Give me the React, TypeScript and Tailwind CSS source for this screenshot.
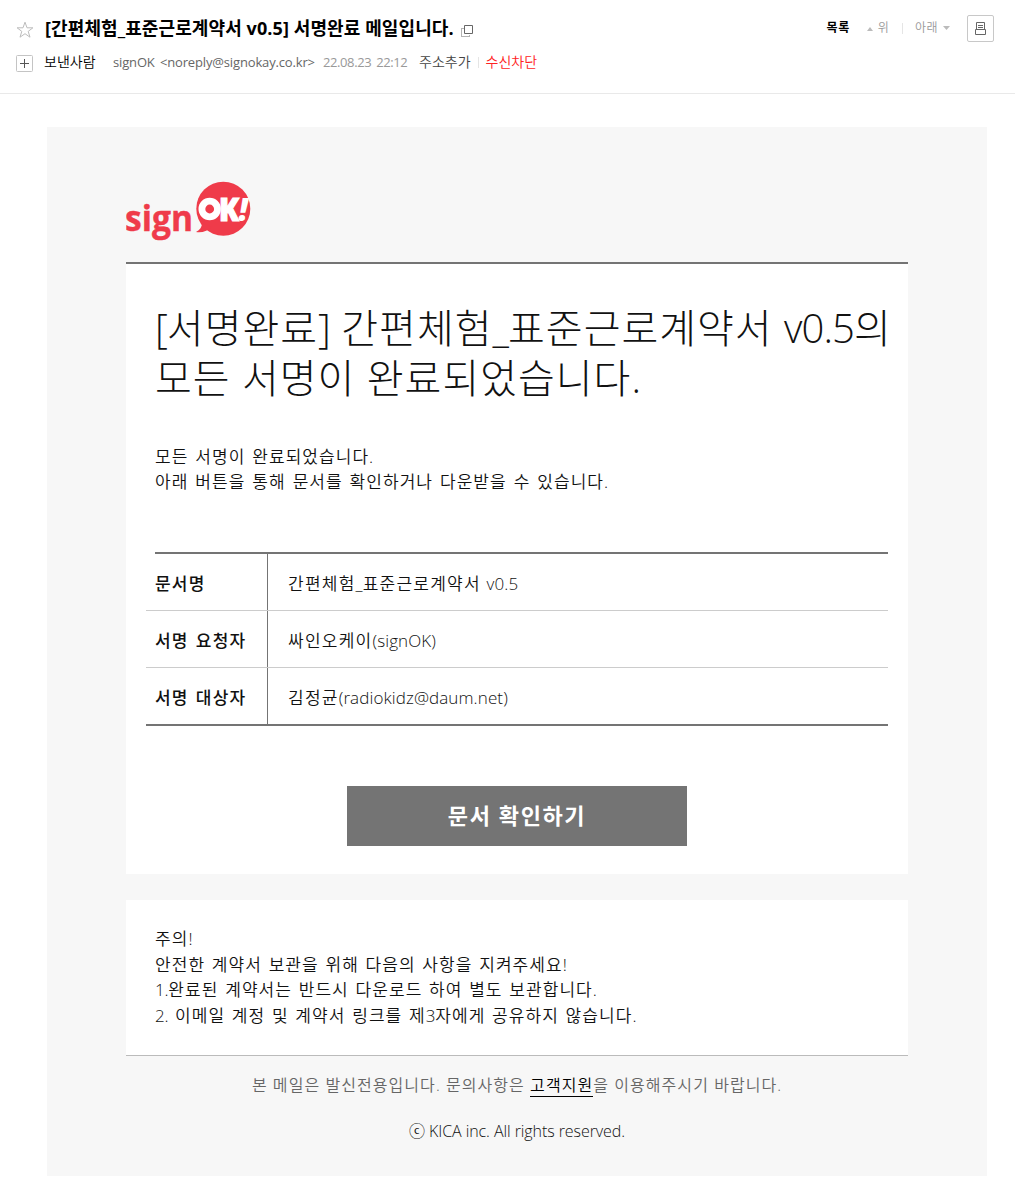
import React from "react";

const rows = [
  { label: "문서명", value: "간편체험_표준근로계약서 v0.5" },
  { label: "서명 요청자", value: "싸인오케이(signOK)" },
  { label: "서명 대상자", value: "김정균(radiokidz@daum.net)" },
];

const notices = [
  "주의!",
  "안전한 계약서 보관을 위해 다음의 사항을 지켜주세요!",
  "1.완료된 계약서는 반드시 다운로드 하여 별도 보관합니다.",
  "2. 이메일 계정 및 계약서 링크를 제3자에게 공유하지 않습니다.",
];

// 영문/숫자 구간만 자간을 따로 적용
const Mixed = ({ text, latin = "tracking-normal" }: { text: string; latin?: string }) => (
  <>
    {text.split(/([!-~]+)/).map((part, i) =>
      i % 2 ? (
        <span key={i} className={latin}>
          {part}
        </span>
      ) : (
        part
      )
    )}
  </>
);

const Logo = () => (
  <svg width="126" height="62" viewBox="0 0 126 62" className="block">
    <circle cx="97.3" cy="28.7" r="27" fill="#ef3b4a" />
    <path d="M76 43c0 4-2 7-6 9 6 1 12-1 16-5z" fill="#ef3b4a" />
    <text
      x="-1"
      y="51"
      fill="#ef3b4a"
      stroke="#ef3b4a"
      strokeWidth="0.4"
      fontSize="36"
      fontWeight="700"
      fontFamily="'Open Sans', sans-serif"
      textLength="68"
      lengthAdjust="spacingAndGlyphs"
    >
      sign
    </text>
    <circle cx="83.7" cy="29" r="7.8" fill="none" stroke="#fff" strokeWidth="6.8" />
    <text
      x="93"
      y="40.5"
      fill="#fff"
      stroke="#fff"
      strokeWidth="1.2"
      fontSize="31"
      fontWeight="800"
      fontFamily="'Open Sans', sans-serif"
      textLength="20"
      lengthAdjust="spacingAndGlyphs"
    >
      K
    </text>
    <text
      x="112.5"
      y="40.5"
      fill="#fff"
      fontSize="31"
      fontWeight="800"
      fontStyle="italic"
      fontFamily="'Open Sans', sans-serif"
    >
      !
    </text>
  </svg>
);

const MailHeader = () => (
  <header className="flex h-[94px] justify-between border-b border-[#e9e9e9] pr-[21px] pl-4">
    <div className="pt-[15px]">
      <div className="flex h-[26px] items-center">
        <svg width="18" height="18" viewBox="0 0 18 18" className="mt-1 mr-[11px]">
          <path
            d="M9 1.2l2 5.6h5.9l-4.7 3.6 1.8 5.8L9 12.7l-5 3.5 1.8-5.8L1.1 6.8H7z"
            fill="none"
            stroke="#bdbdbd"
            strokeWidth="1"
          />
        </svg>
        <h1 className="text-lg leading-[26px] font-bold tracking-[0.1px] whitespace-nowrap text-black">
          [간편체험_표준근로계약서 v0.5] 서명완료 메일입니다.
        </h1>
        <svg width="12" height="12" viewBox="0 0 12 12" className="mt-1.5 ml-[7px]" fill="none">
          <path d="M3.5.5h8v8h-8z" stroke="#666" />
          <path d="M2.5 3.5h-2v8h8v-2" stroke="#666" strokeDasharray="1 1" />
        </svg>
      </div>
      <div className="mt-[9px] flex h-6 items-center text-[13px] leading-6 font-[350] whitespace-nowrap">
        <svg width="17" height="17" viewBox="0 0 17 17" className="mt-0.5 mr-[11px]" fill="none">
          <rect x=".5" y=".5" width="16" height="16" rx="1" stroke="#c4c4c4" />
          <path d="M4 8.5h9M8.5 4v9" stroke="#555" />
        </svg>
        <span className="w-[69px] text-sm leading-6 text-black">보낸사람</span>
        <span className="w-[210px] font-normal tracking-[-0.15px] text-[#666] [word-spacing:2px]">
          signOK &lt;noreply@signokay.co.kr&gt;
        </span>
        <span className="w-[96px] font-normal tracking-[-0.4px] text-[#999] [word-spacing:2px]">22.08.23 22:12</span>
        <span className="text-sm leading-6 text-[#444]">주소추가</span>
        <span className="mx-[7px] h-[11px] w-px bg-[#e5e5e5]" />
        <span className="text-sm leading-6 text-[#f22]">수신차단</span>
      </div>
    </div>
    <nav className="mt-[14px] flex h-7 items-center text-xs">
      <b className="tracking-[0.6px] text-black">목록</b>
      <svg width="6" height="4" className="mt-px mr-[5px] ml-[17px]">
        <path d="M3 0l3 4H0z" fill="#bbb" />
      </svg>
      <span className="font-[350] text-[#999]">위</span>
      <span className="mr-[12px] ml-[13px] h-[11px] w-px bg-[#e5e5e5]" />
      <span className="font-[350] tracking-[0.5px] text-[#999]">아래</span>
      <svg width="7" height="4" className="mr-[17px] ml-[5px]">
        <path d="M0 0h7L3.5 4z" fill="#bbb" />
      </svg>
      <span className="flex h-[27px] w-[27px] items-center justify-center rounded-xs border border-[#c8c8c8]">
        <svg width="11" height="13" viewBox="0 0 11 13" fill="none" stroke="#666">
          <path d="M1.5 7V.5h8V7M.5 7.5h10v5H.5zM3 3.5h5M3 5.5h5" />
        </svg>
      </span>
    </nav>
  </header>
);

const App = () => {
  return (
    <div className="min-h-[1198px] bg-white font-['Open_Sans','Noto_Sans_CJK_KR',sans-serif] text-[#111]">
      <MailHeader />
      <main className="mt-[33px] ml-[47px] h-[1049px] w-[940px] bg-[#f7f7f7] px-[79px] pt-[53px]">
        <Logo />

        <section className="mt-5 h-[612px] border-t-2 border-[#747474] bg-white px-5 pt-[39px]">
          <h2 className="ml-[9px] text-[40px] leading-[50px] font-light tracking-[1px] whitespace-nowrap">
            <Mixed text="[서명완료] 간편체험_표준근로계약서 v0.5의" latin="tracking-[-0.9px]" />
            <br />
            모든 서명이 완료되었습니다.
          </h2>
          <p className="mt-[41px] ml-[9px] text-[17px] leading-[25px] font-[350] tracking-[1.04px] [word-spacing:1.5px]">
            모든 서명이 완료되었습니다.
            <br />
            아래 버튼을 통해 문서를 확인하거나 다운받을 수 있습니다.
          </p>

          {/* 문서 정보 */}
          <div className="mt-[58px] border-b-2 border-[#747474]">
            <div className="ml-[9px] h-0.5 bg-[#747474]" />
            {rows.map((row, i) => (
              <div
                key={row.label}
                className={`flex text-[17px] leading-[60px] whitespace-nowrap ${
                  i < 2 ? "h-[57px] border-b border-[#ccc]" : "h-[56px]"
                }`}
              >
                <span className="w-[122px] border-r border-[#747474] pl-[9px] font-medium tracking-[1.2px] [word-spacing:1.5px]">
                  {row.label}
                </span>
                <span className="pl-5 font-[350] tracking-[1.25px]">
                  <Mixed text={row.value} latin="tracking-[0.1px]" />
                </span>
              </div>
            ))}
          </div>

          <button className="mx-auto mt-[60px] block h-[60px] w-[340px] bg-[#747474] pb-0.5 text-[22px] font-bold tracking-[1.6px] text-white">
            문서 확인하기
          </button>
        </section>

        <section className="mt-[26px] h-[156px] border-b border-[#bbb] bg-white pt-[26px] pl-[29px] text-[17px] leading-[25.6px] font-[350] tracking-[1.07px] [word-spacing:1.2px]">
          {notices.map((line) => (
            <p key={line}>
              <Mixed text={line} latin="tracking-[-0.2px]" />
            </p>
          ))}
        </section>

        <footer className="pt-[17px] text-center text-[16px] leading-6 font-[350]">
          <p className="tracking-[1.06px] text-[#666]">
            본 메일은 발신전용입니다. 문의사항은{" "}
            <a className="inline-block border-b border-black leading-[22px] text-black">고객지원</a>을 이용해주시기
            바랍니다.
          </p>
          <p className="mt-[22px] tracking-[-0.07px]">ⓒ KICA inc. All rights reserved.</p>
        </footer>
      </main>
    </div>
  );
};

export default App;
